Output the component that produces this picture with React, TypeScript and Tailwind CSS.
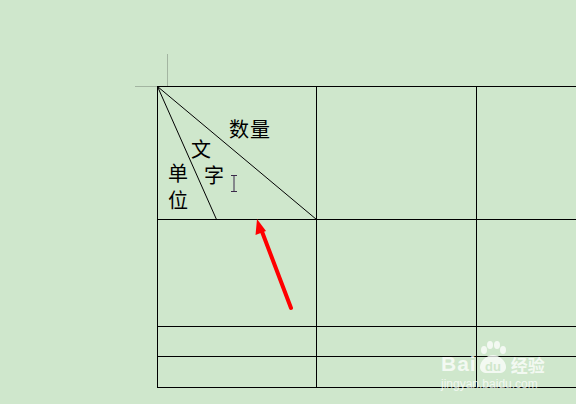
import React from "react";

const cjk = { fontFamily: '"Noto Sans CJK SC", "Noto Sans", sans-serif' };

function Cell({ h, w, children }: { h: string; w: string; children?: React.ReactNode }) {
  return <div className={`relative border-r border-b border-black ${h} ${w}`}>{children}</div>;
}

export default function App() {
  const rows = ["h-[133px]", "h-[107px]", "h-[30px]", "h-[31px]"];
  const cols = ["w-[159px]", "w-[160px]", "w-[160px]"];
  return (
    <div className="relative w-[576px] h-[404px] overflow-hidden bg-[#cfe7cc]">
      {/* crop marks */}
      <div className="absolute left-[167px] top-[54px] w-px h-[32px] bg-[#a3b5a1]" />
      <div className="absolute left-[135px] top-[86px] w-[22px] h-px bg-[#a3b5a1]" />

      <div className="pt-[86px] pl-[157px]">
        <div className="flex flex-col w-[480px] border-l border-t border-black">
          {rows.map((h, r) => (
            <div key={r} className="flex">
              {cols.map((w, c) =>
                r === 0 && c === 0 ? (
                  <Cell key={c} h={h} w={w}>
                    <svg className="absolute -left-px -top-px" width="160" height="134">
                      <line x1="0.5" y1="0.5" x2="159.5" y2="133.5" stroke="#000" strokeWidth="1" />
                      <line x1="0.5" y1="0.5" x2="59.5" y2="133.5" stroke="#000" strokeWidth="1" />
                    </svg>
                    <span style={cjk} className="absolute left-[71px] top-[32px] text-[20px] leading-[20px] text-black tracking-[1px]">数量</span>
                    <span style={cjk} className="absolute left-[33px] top-[52px] text-[20px] leading-[20px] text-black">文</span>
                    <span style={cjk} className="absolute left-[46px] top-[78px] text-[20px] leading-[20px] text-black">字</span>
                    <span style={cjk} className="absolute left-[10px] top-[76px] text-[20px] leading-[20px] text-black">单</span>
                    <span style={cjk} className="absolute left-[10px] top-[103px] text-[20px] leading-[20px] text-black">位</span>
                    <svg className="absolute left-[72px] top-[88px]" width="8" height="18">
                      <path d="M1 0.5h6M1 16.5h6M4 0.5v16" stroke="#3b2a4a" strokeWidth="1" fill="none" />
                    </svg>
                  </Cell>
                ) : (
                  <Cell key={c} h={h} w={w} />
                )
              )}
            </div>
          ))}
        </div>
      </div>

      {/* red arrow */}
      <svg className="absolute left-0 top-0" width="576" height="404">
        <line x1="291" y1="308" x2="261" y2="229" stroke="#ff0000" strokeWidth="4" strokeLinecap="round" />
        <polygon points="257,219 255.5,235 266,231" fill="#ff0000" />
      </svg>

      {/* watermark */}
      <div className="absolute left-[441px] top-[341px] flex flex-col text-white/75">
        <div className="flex items-end h-[33px]">
          <span className="text-[21px] font-bold leading-[21px] tracking-[1px]" style={{ fontFamily: '"Liberation Sans", Arial, sans-serif' }}>Bai</span>
          <svg width="30" height="33" viewBox="0 0 30 33" className="ml-[1px]">
            <g fill="rgba(255,255,255,0.75)">
              <ellipse cx="6" cy="9" rx="3" ry="4" />
              <ellipse cx="12" cy="4" rx="3" ry="4" />
              <ellipse cx="19" cy="4" rx="3" ry="4" />
              <ellipse cx="25" cy="9" rx="3" ry="4" />
              <path d="M15 14c-6 0-13 6-13 12 0 4 3 6 7 6h12c4 0 7-2 7-6 0-6-7-12-13-12z" />
            </g>
            <text x="15" y="30" textAnchor="middle" fontSize="13" fontWeight="bold" fill="#cfe7cc" fontFamily="Liberation Sans, Arial, sans-serif">du</text>
          </svg>
          <span style={cjk} className="ml-[3px] text-[17px] leading-[19px] font-bold">经验</span>
        </div>
        <span className="mt-[4px] text-[12px] leading-[12px]" style={{ fontFamily: '"Liberation Sans", Arial, sans-serif' }}>jingyan.baidu.com</span>
      </div>
    </div>
  );
}
